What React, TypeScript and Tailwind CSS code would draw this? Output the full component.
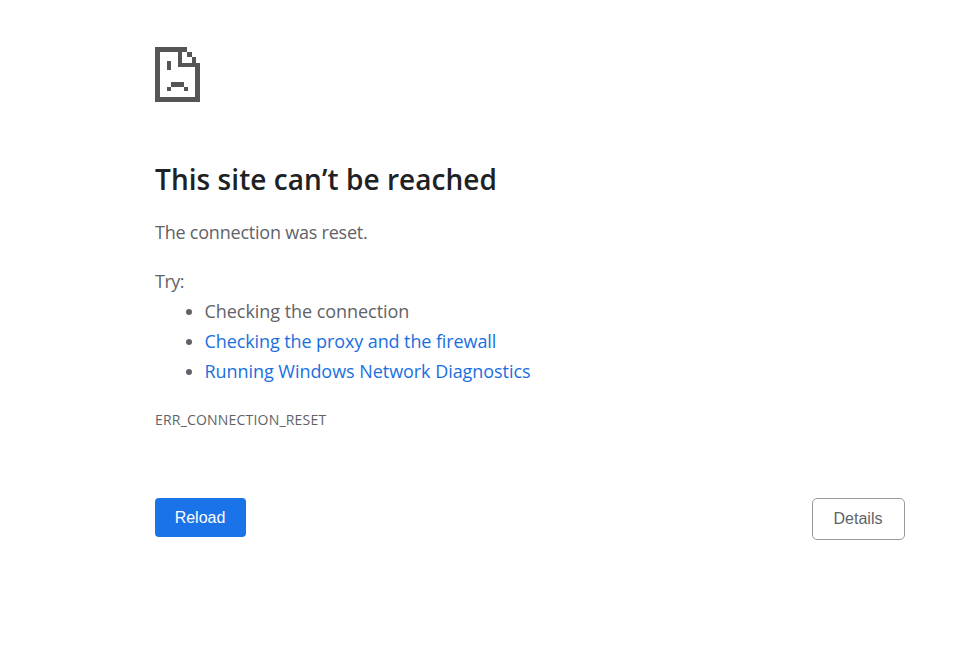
function SadTabIcon() {
  return (
    <svg width="45" height="55" viewBox="0 0 45 55" fill="#555555" shapeRendering="crispEdges">
      <path d="M0 0h32v5H5v45h35V16h5v39H0z" />
      <path d="M23 0h4v16h18v4H23z" />
      <rect x="32" y="5" width="5" height="5" />
      <rect x="37" y="10" width="4" height="6" />
      <rect x="12" y="14" width="4" height="9" />
      <rect x="16" y="35" width="13" height="5" />
      <rect x="12" y="40" width="4" height="4" />
      <rect x="29" y="40" width="4" height="4" />
    </svg>
  );
}

export default function App() {
  return (
    <div className="min-h-[650px] bg-white pl-[155px] pr-[72px] pt-[47px] font-['Open_Sans','Noto_Sans',sans-serif] text-[18px] text-[#5f6368]">
      <SadTabIcon />
      <h1 className="mt-[57px] text-[28px] leading-[40px] font-semibold text-[#202124] tracking-[0.06px]">
        This site can’t be reached
      </h1>
      <p className="mt-[18px] leading-[30px] tracking-[-0.22px]">The connection was reset.</p>
      <p className="mt-[19px] leading-[30px] tracking-[-0.5px]">Try:</p>
      <ul className="list-disc pl-[49.5px] leading-[30px] tracking-[-0.05px] marker:text-[#5f6368]">
        <li>Checking the connection</li>
        <li>
          <a className="tracking-[-0.1px] text-[#1a6fdf]">Checking the proxy and the firewall</a>
        </li>
        <li>
          <a className="text-[#1a6fdf]">Running Windows Network Diagnostics</a>
        </li>
      </ul>
      <div className="mt-[24px] text-[14px] leading-[20px] tracking-[0.2px]">ERR_CONNECTION_RESET</div>
      <div className="mt-[68px] flex items-start justify-between font-['Liberation_Sans',sans-serif] text-[16px]">
        <button className="h-[39px] w-[91px] rounded-[4px] bg-[#1a73e8] pr-[1px] text-white">Reload</button>
        <button className="h-[42px] w-[93px] rounded-[5px] border border-[#9a9a9a] bg-white pr-[1px] text-[#5f6368]">
          Details
        </button>
      </div>
    </div>
  );
}
